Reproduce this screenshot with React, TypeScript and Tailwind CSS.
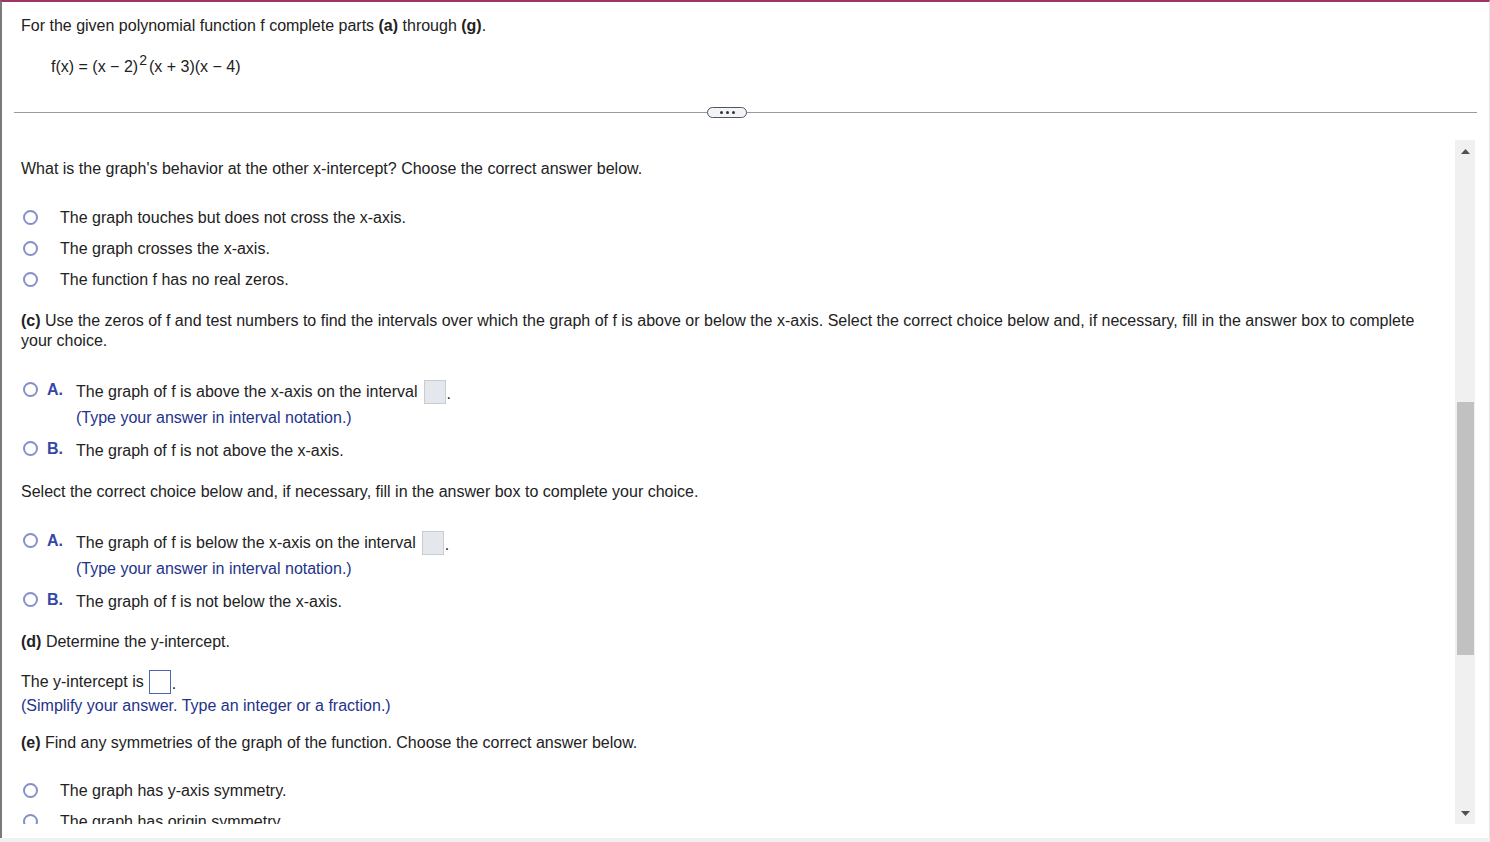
import React from "react";

function Radio() {
  return (
    <span className="inline-block h-[15px] w-[15px] shrink-0 rounded-full border-2 border-[#8690c8] bg-white" />
  );
}

function PlainChoice({ text }: { text: string }) {
  return (
    <div className="flex h-[31px] items-center">
      <span className="ml-[21px] flex w-[37px]">
        <Radio />
      </span>
      <span>{text}</span>
    </div>
  );
}

function LetterChoice({
  letter,
  children,
  hint,
}: {
  letter: string;
  children: React.ReactNode;
  hint?: string;
}) {
  return (
    <div className="flex items-start">
      <span className="ml-[21px] mt-[2px] flex w-[24px]">
        <Radio />
      </span>
      <span className="w-[29px] font-bold leading-[20px] text-[#3547a6]">
        {letter}
      </span>
      <div>
        <div className="flex h-[24px] items-center">{children}</div>
        {hint && <div className="mt-[4px] text-[#24338a]">{hint}</div>}
      </div>
    </div>
  );
}

function GrayBox() {
  return (
    <span className="ml-[6px] inline-block h-[24px] w-[22px] border border-[#c8ccd4] bg-[#e4e7ec]" />
  );
}

export default function App() {
  return (
    <div
      className="flex h-[842px] w-[1490px] flex-col overflow-hidden bg-white text-[16px] leading-[20px] text-[#222]"
      style={{ fontFamily: '"Liberation Sans", Arial, sans-serif' }}
    >
      <div className="flex min-h-0 flex-1 flex-col border-l-2 border-t-2 border-l-[#7a7a7a] border-t-[#9c3763] border-r border-r-[#e6e6e6]">
        <div className="pl-[19px] pt-[14px]">
          For the given polynomial function f complete parts <b>(a)</b>{" "}
          through <b>(g)</b>.
        </div>
        <div className="mt-[21px] pl-[49px]">
          f(x) = (x − 2)
          <span className="relative -top-[7px] ml-px mr-[2px] text-[14px]">2</span>
          (x + 3)(x − 4)
        </div>

        <div className="relative ml-[12px] mr-[12px] mt-[35px] h-px bg-[#9a9a9a]">
          <div className="absolute left-[693px] top-[-5px] flex h-[11px] w-[40px] items-center justify-center gap-[3px] rounded-full border border-[#555] bg-[#f1f4f8]">
            <span className="h-[3px] w-[3px] rounded-full bg-[#333]" />
            <span className="h-[3px] w-[3px] rounded-full bg-[#333]" />
            <span className="h-[3px] w-[3px] rounded-full bg-[#333]" />
          </div>
        </div>

        <div className="mt-[27px] flex h-[684px] shrink-0">
          <div className="min-w-0 flex-1 overflow-hidden pl-[19px] pr-[14px] pt-[19px]">
            <div>
              What is the graph's behavior at the other x-intercept? Choose the
              correct answer below.
            </div>
            <div className="-ml-[19px] mt-[23px]">
              <PlainChoice text="The graph touches but does not cross the x-axis." />
              <PlainChoice text="The graph crosses the x-axis." />
              <PlainChoice text="The function f has no real zeros." />
            </div>

            <div className="mt-[16px]">
              <b>(c)</b> Use the zeros of f and test numbers to find the
              intervals over which the graph of f is above or below the x-axis.
              Select the correct choice below and, if necessary, fill in the
              answer box to complete your choice.
            </div>

            <div className="-ml-[19px] mt-[29px]">
              <LetterChoice letter="A." hint="(Type your answer in interval notation.)">
                The graph of f is above the x-axis on the interval
                <GrayBox />
                <span className="ml-[1px] self-end">.</span>
              </LetterChoice>
              <div className="mt-[11px]">
                <LetterChoice letter="B.">
                  The graph of f is not above the x-axis.
                </LetterChoice>
              </div>
            </div>

            <div className="mt-[19px]">
              Select the correct choice below and, if necessary, fill in the
              answer box to complete your choice.
            </div>

            <div className="-ml-[19px] mt-[29px]">
              <LetterChoice letter="A." hint="(Type your answer in interval notation.)">
                The graph of f is below the x-axis on the interval
                <GrayBox />
                <span className="ml-[1px] self-end">.</span>
              </LetterChoice>
              <div className="mt-[11px]">
                <LetterChoice letter="B.">
                  The graph of f is not below the x-axis.
                </LetterChoice>
              </div>
            </div>

            <div className="mt-[18px]">
              <b>(d)</b> Determine the y-intercept.
            </div>
            <div className="mt-[18px] flex h-[24px] items-center">
              The y-intercept is
              <span className="ml-[5px] inline-block h-[24px] w-[22px] border border-[#4a68b8] bg-white" />
              <span className="ml-[1px] self-end">.</span>
            </div>
            <div className="mt-[2px] text-[#24338a]">
              (Simplify your answer. Type an integer or a fraction.)
            </div>

            <div className="mt-[17px]">
              <b>(e)</b> Find any symmetries of the graph of the function.
              Choose the correct answer below.
            </div>
            <div className="-ml-[19px] mt-[22px]">
              <PlainChoice text="The graph has y-axis symmetry." />
              <PlainChoice text="The graph has origin symmetry." />
              <PlainChoice text="The graph has neither y-axis nor origin symmetry." />
            </div>
          </div>

          <div className="mr-[14px] flex w-[20px] shrink-0 flex-col bg-[#f0f0f0]">
            <div className="flex h-[22px] items-center justify-center">
              <svg width="9" height="5" viewBox="0 0 9 5">
                <path d="M0 5 L4.5 0 L9 5 Z" fill="#505050" />
              </svg>
            </div>
            <div className="mt-[240px] ml-[2px] mr-[1px] h-[253px] bg-[#c1c1c1]" />
            <div className="flex-1" />
            <div className="flex h-[22px] items-center justify-center">
              <svg width="9" height="5" viewBox="0 0 9 5">
                <path d="M0 0 L4.5 5 L9 0 Z" fill="#505050" />
              </svg>
            </div>
          </div>
        </div>
        <div className="flex-1" />
      </div>
      <div className="h-[4px] shrink-0 bg-[#f0f0f0]" />
    </div>
  );
}
